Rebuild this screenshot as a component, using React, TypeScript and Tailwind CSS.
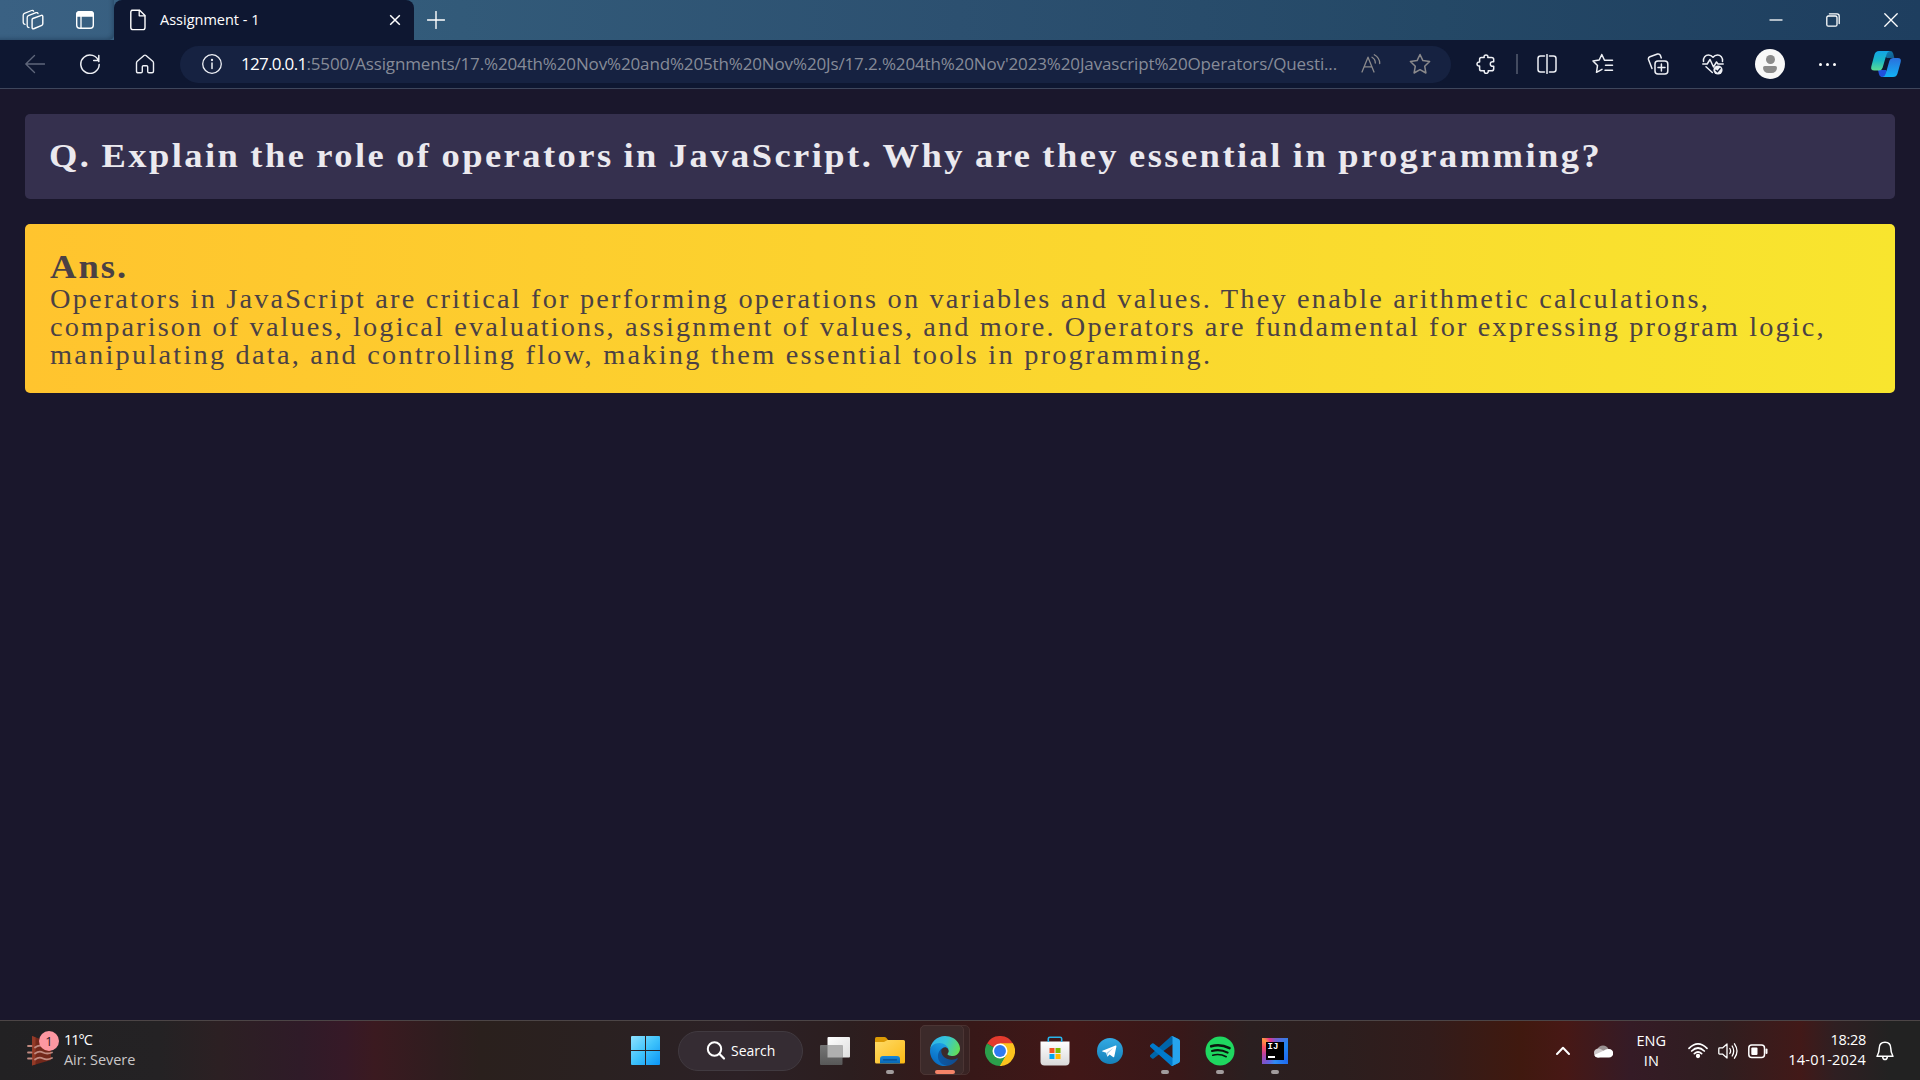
import type { ReactNode } from "react";

function Icon({ size = 20, children, className = "" }: { size?: number; children: ReactNode; className?: string }) {
  return (
    <svg
      width={size}
      height={size}
      viewBox={`0 0 ${size} ${size}`}
      fill="none"
      stroke="currentColor"
      strokeWidth={1.3}
      strokeLinecap="round"
      strokeLinejoin="round"
      className={`shrink-0 ${className}`}
    >
      {children}
    </svg>
  );
}

/* ---------- Tab strip ---------- */

function TabStrip() {
  return (
    <header className="flex h-10 shrink-0 bg-[linear-gradient(90deg,#3a6183_0%,#325a79_24%,#2c5070_50%,#244866_75%,#1e3e5f_100%)] text-white">
      <div className="flex w-[114px] items-center rounded-br-[5px] shadow-[inset_-3px_-3px_4px_-2px_rgba(10,25,50,0.35)]">
        <Icon size={22} className="ml-[22px]">
          <path d="M10 8.500 18.600 5.400Q20 5 20 6.500V13.800Q20 14.900 19 15.300L11.500 18.500Q9.300 19.500 9.300 17.600V9.500Q9.300 8.800 10 8.500Z" strokeWidth="1.400" transform="translate(.8 1)" />
          <path d="M7 18.600Q5.200 18.600 5.200 16.800V8.600Q5.200 7.200 6.400 6.700L14 3.700Q15.600 3.200 16 4.600" />
          <path d="M3 15.400Q1.200 15.200 1.200 13.600V6.200Q1.200 4.800 2.400 4.300L9.600 1.500Q11.200 1 11.600 2.200" />
        </Icon>
        <Icon size={20} className="ml-[31px]">
          <rect x="1.700" y="1.700" width="16.600" height="16.600" rx="3" strokeWidth="1.400" />
          <path d="M1.700 6V4.500Q1.700 1.700 4.500 1.700H15.500Q18.300 1.700 18.300 4.500V6Z" fill="currentColor" />
          <path d="M6 6V18" />
        </Icon>
      </div>
      <div className="flex w-[300px] items-center rounded-t-[8px] bg-[#0e1731]">
        <Icon size={22} className="ml-[13px]">
          <path d="M4.700 1.200H12.600L18 6.600V18.400Q18 20.600 15.800 20.600H6.200Q3.800 20.600 3.800 18.400V3.200Q3.800 1.200 5.800 1.200Z" strokeWidth="1.400" />
          <path d="M12.200 1.400V6.800H17.800" />
        </Icon>
        <span className="ml-[11px] flex-1 text-[14.5px] leading-5">Assignment - 1</span>
        <Icon size={12} className="mr-[13px]">
          <path d="M1.200 1.200 10.800 10.800M10.800 1.200 1.200 10.800" strokeWidth="1.500" strokeLinecap="butt" />
        </Icon>
      </div>
      <div className="flex flex-1 items-center rounded-bl-[5px]">
        <Icon size={18} className="ml-[13px]">
          <path d="M9 .5V17.500M.5 9H17.500" strokeWidth="1.400" />
        </Icon>
      </div>
      <div className="flex items-center">
        <Icon size={14} className="mr-[43px]">
          <path d="M.5 7H13.500" strokeLinecap="butt" />
        </Icon>
        <Icon size={14} className="mr-[44px]">
          <rect x=".8" y="3" width="10.200" height="10.200" rx="1.500" />
          <path d="M3.400.8H11Q13.200.8 13.200 3V10.600" />
        </Icon>
        <Icon size={14} className="mr-[22px]">
          <path d="M.8.8 13.200 13.200M13.200.8.8 13.200" />
        </Icon>
      </div>
    </header>
  );
}

/* ---------- Toolbar ---------- */

function CopilotLogo() {
  return (
    <svg width="32" height="28" viewBox="0 0 32 28" className="shrink-0">
      <defs>
        <linearGradient id="cpA" x1="0" y1="0" x2="0" y2="1">
          <stop offset="0" stopColor="#12a4e6" />
          <stop offset=".5" stopColor="#1cb8c4" />
          <stop offset="1" stopColor="#5cdc92" />
        </linearGradient>
        <linearGradient id="cpB" x1="0" y1="0" x2="0" y2="1">
          <stop offset="0" stopColor="#2a70dd" />
          <stop offset="1" stopColor="#12b2f5" />
        </linearGradient>
        <linearGradient id="cpC" x1="0" y1="0" x2="1" y2="1">
          <stop offset="0" stopColor="#0e86bd" />
          <stop offset="1" stopColor="#125a8a" />
        </linearGradient>
      </defs>
      <path d="M15 1H20Q22.500 1 23.200 3.400L24.300 8H17L12 4Z" fill="url(#cpC)" />
      <path d="M8 20H16L19 25Q17 27 14.500 27H12.500Q9.800 27 9 24.200Z" fill="#2050dc" />
      <path d="M9 1H19.500Q17.300 1.600 16.500 4.600L12.600 17.800Q11.800 20.500 9 20.500H4.300Q.300 20.500 1.300 16.400L4.500 4.500Q5.500 1 9 1Z" fill="url(#cpA)" />
      <path d="M23 8H27.700Q31.700 8 30.700 12L27.500 23.500Q26.500 27 23 27H12.500Q15 26.500 15.800 23.500L19.400 10.700Q20.200 8 23 8Z" fill="url(#cpB)" />
    </svg>
  );
}

function Toolbar() {
  return (
    <nav className="flex h-[49px] shrink-0 items-center border-b border-[#3e465c] bg-[#0e1731] text-[#eef0f5]">
      <Icon size={20} className="ml-[25px] text-[#5f677b]">
        <path d="M19.500 10H.8M9.500 1.500.8 10 9.500 18.500" />
      </Icon>
      <Icon size={20} className="ml-[35px]">
        <path d="M18.800 7.500A9.200 9.200 0 1 0 19.200 10.500M18.800 1.500V6.600H13.700" strokeWidth="1.500" />
      </Icon>
      <Icon size={20} className="ml-[35px]">
        <path d="M9 1.500Q10 .7 11 1.500L17.700 7.300Q18.500 8 18.500 9V17.300Q18.500 18.800 17 18.800H14Q12.700 18.800 12.700 17.500V12.800Q12.700 11.700 11.600 11.700H8.400Q7.300 11.700 7.300 12.800V17.500Q7.300 18.800 6 18.800H3Q1.500 18.800 1.500 17.300V9Q1.500 8 2.300 7.300Z" strokeWidth="1.400" />
      </Icon>

      <div className="ml-[25px] flex h-[37px] w-[1271px] items-center rounded-full bg-[#162241]">
        <Icon size={20} className="ml-[22px]">
          <circle cx="10" cy="10" r="9.300" />
          <path d="M10 9V14.500" strokeWidth="1.500" />
          <circle cx="10" cy="6" r=".5" fill="currentColor" />
        </Icon>
        <p className="ml-[19px] w-[1120px] whitespace-nowrap text-[17px] leading-6 text-[#868b98]">
          <span className="tracking-[-0.7px] text-white">127.0.0.1</span>
          <span className="tracking-[-0.14px]">
            :5500/Assignments/17.%204th%20Nov%20and%205th%20Nov%20Js/17.2.%204th%20Nov'2023%20Javascript%20Operators/Questi...
          </span>
        </p>
        <Icon size={20} className="text-[#8b8a8c]">
          <path d="M1 18 7 3.200 13 18M3.300 12.800H10.700" />
          <path d="M11 3.200Q14.300 5 14.300 9M13.300 .8Q18.800 4 18.700 9.500" />
        </Icon>
        <Icon size={22} className="ml-[28px] text-[#8b8a8c]">
          <path d="M11 1.500 13.900 7.600 20.600 8.500 15.700 13.200 16.900 20 11 16.700 5.100 20 6.300 13.200 1.400 8.500 8.100 7.600Z" strokeWidth="1.500" />
        </Icon>
      </div>

      <Icon size={20} className="ml-[25px]">
        <path
          d="M5.300 3.500H8.200C7.700 1.700 9 .9 10 .9S12.300 1.700 11.800 3.500H15.500Q17.700 3.500 17.700 5.500V7.800C15.300 7.200 14.300 8.600 14.300 10S15.300 12.800 17.700 12.200V14.700Q17.700 16.800 15.500 16.800H12.200C12.500 18.700 11.300 19.500 10.200 19.500S8 18.700 8.300 16.800H5.500Q3.600 16.800 3.600 14.900V12C1.800 12.400 1 11.100 1 10S1.800 7.700 3.600 8V5.300Q3.600 3.500 5.300 3.500Z"
          strokeWidth="1.500"
        />
      </Icon>
      <span className="ml-5 h-5 w-0.5 bg-[#434b60]" />
      <Icon size={20} className="ml-[19px]">
        <path d="M7.500 2H3.500Q1 2 1 4.500V15.500Q1 18 3.500 18H7.500M12.500 2H16.500Q19 2 19 4.500V15.500Q19 18 16.500 18H12.500" strokeWidth="1.500" />
        <path d="M10 .5V19.500" strokeWidth="1.500" />
      </Icon>
      <Icon size={22} className="ml-[35px]">
        <path d="M12.500 7.300 9.800 1.500 7.200 7 1 8 5.500 12.500 4.500 19.300 10 16.300M12.500 7.300H20.500M13.500 12.300H20.500M13 17.300H20.500" strokeWidth="1.500" />
      </Icon>
      <Icon size={22} className="ml-[33px]">
        <rect x="8" y="8" width="12.800" height="13" rx="3" strokeWidth="1.500" />
        <path d="M14.400 11V18M11 14.500H18" strokeWidth="1.500" />
        <path d="M5 15.500 1.500 6.500Q1 4.500 2.900 3.700L10.500 1Q12.500.5 13.400 2.400L14.300 4.900" strokeWidth="1.500" />
      </Icon>
      <Icon size={22} className="ml-[33px]">
        <path d="M1.500 8.500C1 4.500 3.500 2 6.500 2 8.500 2 10 3 11 4.300 12 3 13.500 2 15.500 2 18.500 2 21 4.500 20.500 8.500" strokeWidth="1.500" />
        <path d="M.8 11H5.200L8 6.500 11.500 14 14.500 9 16 11H21.200M4 13.800 10.300 19.500" strokeWidth="1.500" />
        <circle cx="16" cy="17" r="4.600" fill="currentColor" stroke="none" />
        <path d="M13.900 17.200 15.400 18.700 18.200 15.500" stroke="#0e1731" />
      </Icon>
      <span className="ml-[31px] flex size-[30px] shrink-0 flex-col items-center rounded-full bg-[#f8f8f8] pt-[6px]">
        <span className="size-[9px] rounded-full bg-[#8b8b8b]" />
        <span className="mt-[2px] h-[7px] w-[14px] rounded-t-[2px] rounded-b-[6px] bg-[#8b8b8b]" />
      </span>
      <span className="ml-[34px] flex gap-1">
        <span className="size-[3px] rounded-full bg-white" />
        <span className="size-[3px] rounded-full bg-white" />
        <span className="size-[3px] rounded-full bg-white" />
      </span>
      <span className="ml-[34px]">
        <CopilotLogo />
      </span>
    </nav>
  );
}

/* ---------- Page ---------- */

function Page() {
  return (
    <main className="flex-1 bg-[#1a172c] px-[25px] pt-[25px] font-['Liberation_Serif',serif]">
      <section className="rounded-[5px] bg-[#35304e] py-[25px] pl-6">
        <h1 className="origin-left scale-x-[1.09] whitespace-nowrap text-[33.5px] leading-[34px] font-bold tracking-[2.25px] text-[#ebe9ee] [word-spacing:-1.5px] pb-px">
          Q. Explain the role of operators in JavaScript. Why are they essential in programming?
        </h1>
      </section>
      <section className="mt-[25px] rounded-[5px] bg-[linear-gradient(90deg,#ffc42e,#f8e52e)] py-[25px] pl-[25px] text-[#4b4144]">
        <h2 className="origin-left scale-x-[1.09] text-[33.5px] leading-[35px] font-bold tracking-[1.9px]">Ans.</h2>
        <div className="origin-left scale-x-105 whitespace-nowrap pt-px text-[27px] leading-[28px]">
          <p className="tracking-[2.07px]">
            Operators in JavaScript are critical for performing operations on variables and values. They enable arithmetic calculations,
          </p>
          <p className="tracking-[2.01px]">
            comparison of values, logical evaluations, assignment of values, and more. Operators are fundamental for expressing program logic,
          </p>
          <p className="-mb-px tracking-[2.12px]">
            manipulating data, and controlling flow, making them essential tools in programming.
          </p>
        </div>
      </section>
    </main>
  );
}

/* ---------- Taskbar ---------- */

function AirQualityIcon() {
  return (
    <svg width="28" height="32" viewBox="0 0 28 32" className="shrink-0">
      <path d="M5 1 24 8V25L5 30.500Z" fill="#72281b" />
      <path d="M5 1 8.500 2.300V29.500L5 30.500Z" fill="#933a27" />
      <g fill="none" stroke="#c08a80" strokeWidth="1.800" strokeLinecap="round">
        <path d="M1 11H4.500M1 17.500H4.500M1 23.500H4.500M8 12.500Q12 9.500 16 11.500T25 11.500M8 18.500Q12 15.500 16 17.500T25 17.500M8 24.500Q12 21.500 16 23.500T25 23" />
      </g>
    </svg>
  );
}

function WindowsLogo() {
  return (
    <svg width="29" height="29" viewBox="0 0 29 29">
      <defs>
        <linearGradient id="win" gradientUnits="userSpaceOnUse" x1="0" y1="0" x2="29" y2="29">
          <stop offset="0" stopColor="#8ee2ff" />
          <stop offset=".5" stopColor="#3fc3fb" />
          <stop offset="1" stopColor="#0a94f5" />
        </linearGradient>
      </defs>
      <path d="M1 0H14V14H0V1Q0 0 1 0ZM15 0H28Q29 0 29 1V14H15ZM0 15H14V29H1Q0 29 0 28ZM15 15H29V28Q29 29 28 29H15Z" fill="url(#win)" />
    </svg>
  );
}

function TaskViewIcon() {
  return (
    <svg width="30" height="28" viewBox="0 0 30 28">
      <defs>
        <linearGradient id="tvW" x1="0" y1="0" x2="1" y2="1">
          <stop offset="0" stopColor="#ffffff" />
          <stop offset="1" stopColor="#dedede" />
        </linearGradient>
        <linearGradient id="tvG" x1="0" y1="0" x2="0" y2="1">
          <stop offset="0" stopColor="#757575" />
          <stop offset="1" stopColor="#585858" />
        </linearGradient>
      </defs>
      <rect x="7.500" y="0" width="22.500" height="20.500" rx="1" fill="url(#tvW)" />
      <rect x="0" y="8" width="22.500" height="20" rx="1" fill="url(#tvG)" />
      <rect x="7.500" y="8" width="15" height="12.500" fill="#b0b0b0" />
    </svg>
  );
}

function FolderIcon() {
  return (
    <svg width="30" height="27" viewBox="0 0 30 27">
      <defs>
        <linearGradient id="fold" x1="0" y1="0" x2="1" y2="1">
          <stop offset="0" stopColor="#ffdb68" />
          <stop offset="1" stopColor="#fbb913" />
        </linearGradient>
        <linearGradient id="foldB" x1="0" y1="0" x2="0" y2="1">
          <stop offset="0" stopColor="#1489dc" />
          <stop offset="1" stopColor="#0967b4" />
        </linearGradient>
      </defs>
      <path d="M0 1.500Q0 0 1.500 0H9.500Q10.500 0 11.200.8L13.500 3.500V8H0Z" fill="#dc9a05" />
      <path d="M0 5H9L12.500 3H28.500Q30 3 30 4.500V25Q30 26.500 28.500 26.500H1.500Q0 26.500 0 25Z" fill="url(#fold)" />
      <path d="M5 26.500V22Q5 19 8 19H22Q25 19 25 22V26.500Z" fill="url(#foldB)" />
      <path d="M8.500 22.800H21.500" stroke="#064c8f" strokeWidth="1.200" strokeLinecap="round" />
    </svg>
  );
}

function EdgeLogo() {
  return (
    <svg width="30" height="30" viewBox="0 0 256 256">
      <defs>
        <linearGradient id="edA" x1=".1" y1=".7" x2="1" y2=".7">
          <stop offset="0" stopColor="#0c59a4" />
          <stop offset="1" stopColor="#114a8b" />
        </linearGradient>
        <linearGradient id="edB" x1=".6" y1=".1" x2=".2" y2="1">
          <stop offset="0" stopColor="#1b9de2" />
          <stop offset=".5" stopColor="#0f7dd0" />
          <stop offset="1" stopColor="#0567bd" />
        </linearGradient>
        <linearGradient id="edC" x1="0" y1=".4" x2="1" y2=".7">
          <stop offset="0" stopColor="#2fb4ec" />
          <stop offset=".45" stopColor="#35c5d8" />
          <stop offset="1" stopColor="#66e04f" />
        </linearGradient>
      </defs>
      <path d="M231 190.500c-3.400 1.800-6.900 3.400-10.500 4.700-11.500 4.300-23.600 6.500-35.900 6.500-47.300 0-88.500-32.500-88.500-74.300.1-11.400 6.400-21.900 16.400-27.300-42.800 1.800-53.800 46.400-53.800 72.500 0 73.900 68.100 81.400 82.800 81.400 7.900 0 19.800-2.300 27-4.600l1.300-.4c27.600-9.500 51-28.100 66.600-52.800 1.200-1.900.6-4.300-1.200-5.500-1.300-.8-2.900-.9-4.200-.2z" fill="url(#edA)" />
      <path d="M105.700 241.400c-8.900-5.500-16.600-12.800-22.700-21.300-26.300-36-18.400-86.500 17.600-112.800 3.800-2.700 7.700-5.200 11.900-7.200 3.100-1.500 8.400-4.100 15.500-4 10.100.1 19.600 4.900 25.700 13 4 5.400 6.300 11.900 6.400 18.700 0-.2 24.500-79.600-80-79.600-43.900 0-80 41.700-80 78.200-.2 19.300 4 38.500 12.100 56 27.600 58.800 94.800 87.600 156.400 67.100-21.100 6.600-44.100 3.700-62.900-8.100z" fill="url(#edB)" />
      <path d="M152.300 148.900c-.8 1-3.300 2.500-3.300 5.700 0 2.600 1.700 5.100 4.700 7.200 14.400 10 41.500 8.700 41.600 8.700 10.700 0 21.100-2.900 30.300-8.300 18.800-11 30.400-31.100 30.400-52.900.3-22.400-8-37.300-11.300-43.900C223.500 23.900 177.700 0 128 0 58 0 1 56.200 0 126.200c.5-36.500 36.800-66 80-66 3.500 0 23.500.3 42 10.100 16.300 8.600 24.900 18.900 30.800 29.200 6.200 10.700 7.300 24.100 7.300 29.500s-2.700 13.300-7.800 19.900z" fill="url(#edC)" />
    </svg>
  );
}

function ChromeLogo() {
  return (
    <svg width="30" height="30" viewBox="0 0 48 48">
      <path d="M24 24 3.200 12A24 24 0 0 1 44.800 12Z" fill="#e33b2e" />
      <path d="M24 24 44.800 12A24 24 0 0 1 24 48Z" fill="#fcc31e" />
      <path d="M24 24V48A24 24 0 0 1 3.200 12Z" fill="#2b9e4b" />
      <path d="M24 12H44.800L34.400 30 24 48 30 27Z" fill="#fcc31e" />
      <path d="M13.600 30 3.200 12 14 22 34.400 30 24 48Z" fill="#2b9e4b" />
      <path d="M34.400 30 24 48H27L44.800 12H24Z" fill="#fcc31e" />
      <circle cx="24" cy="24" r="12" fill="#fff" />
      <circle cx="24" cy="24" r="9.500" fill="#2f7bf0" />
    </svg>
  );
}

function StoreLogo() {
  return (
    <svg width="30" height="30" viewBox="0 0 30 30">
      <defs>
        <linearGradient id="bag" x1="0" y1="0" x2="0" y2="1">
          <stop offset="0" stopColor="#ffffff" />
          <stop offset="1" stopColor="#d9d9d9" />
        </linearGradient>
      </defs>
      <path d="M.5 5.500H29.500V25.500Q29.500 29.500 25.500 29.500H4.500Q.500 29.500 .500 25.500Z" fill="url(#bag)" />
      <path d="M8.300 6V2.800Q8.300 1.300 9.800 1.300H20.200Q21.700 1.300 21.700 2.800V6" fill="none" stroke="#28b4ea" strokeWidth="1.600" />
      <path d="M9.500 12H14.500V17H9.500Z" fill="#f25022" />
      <path d="M15.500 12H20.500V17H15.500Z" fill="#7fba00" />
      <path d="M9.500 18H14.500V23H9.500Z" fill="#00a4ef" />
      <path d="M15.500 18H20.500V23H15.500Z" fill="#ffb900" />
    </svg>
  );
}

function TelegramLogo() {
  return (
    <svg width="26" height="26" viewBox="0 0 26 26">
      <defs>
        <linearGradient id="tg" x1="0" y1="0" x2="0" y2="1">
          <stop offset="0" stopColor="#33aae4" />
          <stop offset="1" stopColor="#1580b9" />
        </linearGradient>
      </defs>
      <circle cx="13" cy="13" r="13" fill="url(#tg)" />
      <path d="M5.400 12.700 18.600 7.500Q19.600 7.200 19.400 8.400L17.300 18.600Q17 19.700 16 19.100L12.600 16.600 11 18.200Q10.300 18.900 10.100 17.900L9.100 14.700 5.500 13.600Q4.500 13.200 5.400 12.700Z" fill="#fff" />
      <path d="M9.500 14.800 16.500 9.800 11 15.600 10.500 18Z" fill="#a9cfe6" />
    </svg>
  );
}

function VsCodeLogo() {
  return (
    <svg width="30" height="30" viewBox="0 0 100 100">
      <path d="M96.500 10.800 75.900.9a6.200 6.200 0 0 0-7.100 1.200L1.300 63.600a4.200 4.200 0 0 0 0 6.200l5.500 5a4.200 4.200 0 0 0 5.300.2L93.400 13.400c2.700-2.100 6.600-.1 6.600 3.300v-.2a6.300 6.300 0 0 0-3.500-5.700Z" fill="#0065a9" />
      <path d="m96.500 89.200-20.600 9.900a6.200 6.200 0 0 1-7.100-1.200L1.300 36.400a4.200 4.200 0 0 1 0-6.200l5.500-5a4.200 4.200 0 0 1 5.300-.2l81.300 61.600c2.700 2.100 6.600.1 6.600-3.300v.2a6.300 6.300 0 0 1-3.500 5.700Z" fill="#007acc" />
      <path d="M75.900 99.100a6.200 6.200 0 0 1-7.100-1.200c2.300 2.300 6.200.7 6.200-2.600V4.700c0-3.300-3.900-4.900-6.200-2.600a6.200 6.200 0 0 1 7.100-1.200l20.600 9.900a6.200 6.200 0 0 1 3.500 5.600v67.200a6.200 6.200 0 0 1-3.500 5.600l-20.600 9.900Z" fill="#26a4ee" />
    </svg>
  );
}

function SpotifyLogo() {
  return (
    <svg width="30" height="30" viewBox="0 0 30 30">
      <circle cx="15" cy="15" r="14.500" fill="#1fd760" />
      <g fill="none" stroke="#0b150e" strokeLinecap="round">
        <path d="M6.200 10.300Q15.500 7.500 24.500 12.200" strokeWidth="2.600" />
        <path d="M7 15Q15 12.700 22.600 16.600" strokeWidth="2.100" />
        <path d="M7.800 19.200Q14.800 17.300 21.200 20.700" strokeWidth="1.700" />
      </g>
    </svg>
  );
}

function IntelliJLogo() {
  return (
    <span className="flex size-[26px] bg-[conic-gradient(from_0deg,#7a5cc8_0deg,#1f86f2_60deg,#1f6cf0_130deg,#2f8df5_180deg,#6a5ad8_215deg,#c0419c_255deg,#fb4f5f_290deg,#fd9640_315deg,#e8318c_335deg,#7a5cc8_360deg)] p-[4px]">
      <span className="flex size-[18px] flex-col justify-between bg-black px-[2px] pt-px pb-[2px] text-white">
        <span className="font-['Liberation_Mono',monospace] text-[9px] leading-[9px] font-bold">IJ</span>
        <span className="h-[1.5px] w-[7px] bg-white" />
      </span>
    </span>
  );
}

function TaskbarSlot({ children, running = false }: { children: ReactNode; running?: boolean }) {
  return (
    <div className="relative flex h-full w-[55px] shrink-0 items-center justify-center">
      {children}
      {running && <span className="absolute bottom-[6px] h-1 w-2 rounded-full bg-[#a29c9d]" />}
    </div>
  );
}

function Taskbar() {
  return (
    <footer className="flex h-[60px] shrink-0 items-center border-t border-[#4c4546] bg-[linear-gradient(90deg,#222123_0px,#242224_160px,#2c2023_220px,#2f1b28_300px,#361927_345px,#3b1a20_375px,#2f1d1f_440px,#2a201d_480px,#2a2121_600px,#2c2126_740px,#2c1e1f_850px,#371818_970px,#411717_1070px,#381819_1180px,#2a1f20_1250px,#2c1e1e_1340px,#321c1b_1430px,#40190f_1520px,#471815_1565px,#351b26_1630px,#2f1e20_1720px,#421918_1800px,#2f1f22_1835px,#222222_1890px,#222222_1920px)] text-[14.5px] leading-5 text-white">
      <div className="flex w-[618px] items-center">
        <div className="relative ml-[27px]">
          <AirQualityIcon />
          <span className="absolute -top-[4px] left-[12px] flex size-5 items-center justify-center rounded-full bg-[#fd97a1] text-[13px] text-[#30191d]">
            1
          </span>
        </div>
        <div className="ml-[9px] pb-px">
          <p className="tracking-[-1px]">11°C</p>
          <p className="tracking-[-0.05px] text-[#c9c7c8]">Air: Severe</p>
        </div>
      </div>

      <TaskbarSlot>
        <WindowsLogo />
      </TaskbarSlot>
      <button className="mr-1 ml-[5px] flex h-10 w-[125px] shrink-0 items-center rounded-full border border-[#413a40] bg-[#352c33] pl-[27px]">
        <Icon size={20}>
          <circle cx="8.500" cy="8" r="6.700" strokeWidth="2" />
          <path d="M13.300 12.800 18 17.500" strokeWidth="2.200" />
        </Icon>
        <span className="ml-[5px] text-[14px]">Search</span>
      </button>
      <TaskbarSlot>
        <TaskViewIcon />
      </TaskbarSlot>
      <TaskbarSlot running>
        <FolderIcon />
      </TaskbarSlot>
      <div className="relative flex h-full w-[55px] shrink-0 items-center justify-center">
        <span className="absolute top-[4px] left-[3px] h-[50px] w-[50px] rounded-[5px] border border-[#49302f] bg-[#382323]" />
        <span className="absolute top-[4px] left-[3px] h-[50px] w-[44px] rounded-[5px] border border-[#4b3534] bg-[#3c2a2a]" />
        <span className="relative">
          <EdgeLogo />
        </span>
        <span className="absolute bottom-[6px] h-1 w-5 rounded-full bg-[#f58468]" />
      </div>
      <TaskbarSlot>
        <ChromeLogo />
      </TaskbarSlot>
      <TaskbarSlot>
        <StoreLogo />
      </TaskbarSlot>
      <TaskbarSlot>
        <TelegramLogo />
      </TaskbarSlot>
      <TaskbarSlot running>
        <VsCodeLogo />
      </TaskbarSlot>
      <TaskbarSlot running>
        <SpotifyLogo />
      </TaskbarSlot>
      <TaskbarSlot running>
        <IntelliJLogo />
      </TaskbarSlot>

      <div className="flex flex-1 items-center justify-end">
        <Icon size={14}>
          <path d="M1 10 7 3.800 13 10" strokeWidth="2" />
        </Icon>
        <svg width="20" height="14" viewBox="0 0 20 14" className="ml-[23px] shrink-0">
          <path d="M4.500 5A6 6 0 0 1 15.500 5L10 9Z" fill="#9a9192" />
          <path d="M5 13.500A4.500 4.500 0 0 1 4 4.800Q6 4 8.500 5.500L14 9 6 13.500Z" fill="#cfc9ca" />
          <path d="M1.300 11 11 6.500Q13 4.500 16 5A4.200 4.200 0 0 1 16 13.500H4.500Q2.300 13.500 1.300 11Z" fill="#fff" />
        </svg>
        <div className="ml-[22px] w-8 text-center">
          <p>ENG</p>
          <p>IN</p>
        </div>
        <Icon size={20} className="ml-[21px]">
          <g strokeWidth="1.700" transform="translate(0 -1)">
            <path d="M1 8.300Q10 -.5 19 8.300M3.700 11Q10 5 16.300 11M6.400 13.700Q10 10.300 13.600 13.700" />
            <circle cx="10" cy="16" r="1.300" fill="currentColor" />
          </g>
        </Icon>
        <Icon size={20} className="ml-[10px]">
          <path d="M.8 7.700Q.8 6.900 1.600 6.900H4.500L9 3V17L4.500 13.100H1.600Q.8 13.100 .8 12.300Z" />
          <path d="M11.800 7.500Q13.400 10 11.800 12.500M14.200 5Q17.200 10 14.200 15M16.500 2.800Q21.500 10 16.500 17.200" />
        </Icon>
        <Icon size={20} className="ml-[10px]">
          <rect x=".8" y="4" width="15.700" height="12.500" rx="3" strokeWidth="1.500" />
          <rect x="3.300" y="6.500" width="6.200" height="7.500" rx="1" fill="currentColor" stroke="none" />
          <path d="M18.500 8.500V12" strokeWidth="2" />
        </Icon>
        <div className="ml-5 pb-px text-right">
          <p className="tracking-[-0.3px]">18:28</p>
          <p className="tracking-[0.2px]">14-01-2024</p>
        </div>
        <Icon size={20} className="mr-[25px] ml-[9px]">
          <path d="M10 1.200C6 1.200 4.200 4 4.200 7.500 4.200 11.500 3.500 12.500 2 15.300H18C16.500 12.500 15.800 11.500 15.800 7.500 15.800 4 14 1.200 10 1.200ZM7.700 15.800Q8 18.600 10 18.600T12.300 15.800" strokeWidth="1.500" />
        </Icon>
      </div>
    </footer>
  );
}

export default function App() {
  return (
    <div className="flex h-[1080px] w-[1920px] flex-col overflow-hidden font-['Open_Sans','Noto_Sans',sans-serif]">
      <TabStrip />
      <Toolbar />
      <Page />
      <Taskbar />
    </div>
  );
}
